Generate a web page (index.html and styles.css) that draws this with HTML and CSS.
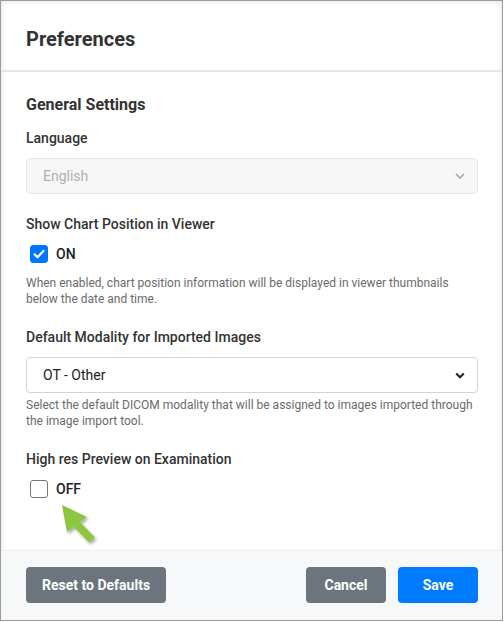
FILE: index.html
```html
<!DOCTYPE html>
<html>
<head>
<meta charset="utf-8">
<link rel="stylesheet" href="styles.css">
</head>
<body>
<div class="dialog">
  <div class="header">
    <h1 class="title">Preferences</h1>
  </div>
  <div class="content">
    <h2 class="section">General Settings</h2>
    <div class="group">
      <label class="label">Language</label>
      <div class="select disabled">
        <span>English</span>
        <svg class="chev" width="10" height="6" viewBox="0 0 10 6"><path d="M1 1l4 4 4-4" fill="none" stroke="#aaa" stroke-width="1.7"/></svg>
      </div>
    </div>
    <div class="group">
      <label class="label">Show Chart Position in Viewer</label>
      <div class="check-row">
        <span class="box checked"><svg width="14" height="14" viewBox="0 0 14 14"><path d="M2.6 7.4l2.9 2.9 5.9-6.4" fill="none" stroke="#fff" stroke-width="2.2" stroke-linecap="round" stroke-linejoin="round"/></svg></span>
        <span class="check-text">ON</span>
      </div>
      <p class="help">When enabled, chart position information will be displayed in viewer thumbnails below the date and time.</p>
    </div>
    <div class="group">
      <label class="label">Default Modality for Imported Images</label>
      <div class="select">
        <span>OT - Other</span>
        <svg class="chev" width="10" height="7" viewBox="0 0 10 7"><path d="M1.2 1.5l3.8 3.8 3.8-3.8" fill="none" stroke="#222" stroke-width="2"/></svg>
      </div>
      <p class="help tight">Select the default DICOM modality that will be assigned to images imported through the image import tool.</p>
    </div>
    <div class="group last">
      <label class="label">High res Preview on Examination</label>
      <div class="check-row">
        <span class="box"></span>
        <span class="check-text">OFF</span>
      </div>
      <svg class="arrow" width="48" height="50" viewBox="0 0 48 50">
        <defs>
          <filter id="sh" x="-30%" y="-30%" width="160%" height="160%">
            <feDropShadow dx="1.5" dy="2" stdDeviation="1.5" flood-color="#000" flood-opacity="0.35"/>
          </filter>
        </defs>
        <polygon filter="url(#sh)" fill="#8dc63f" points="5,3 30,15 23,19.9 38,35.4 32,40.6 17,25.1 10,30"/>
      </svg>
    </div>
  </div>
  <div class="footer">
    <button class="btn gray">Reset to Defaults</button>
    <div class="spacer"></div>
    <button class="btn gray small">Cancel</button>
    <button class="btn blue small">Save</button>
  </div>
</div>
</body>
</html>
```
FILE: styles.css
```css
html, body {
  margin: 0;
  padding: 0;
  background: #fff;
}
body {
  font-family: Roboto, "Liberation Sans", Arial, sans-serif;
  color: #212529;
}
.dialog {
  width: 503px;
  height: 621px;
  box-sizing: border-box;
  border: 1px solid #9c9c9c;
  box-shadow: inset 0 0 6px rgba(0,0,0,0.12);
  display: flex;
  flex-direction: column;
  background: #fff;
}
.header {
  height: 71px;
  box-sizing: border-box;
  border-bottom: 2px solid #e6e6e6;
  padding: 6px 24px 0 25px;
  display: flex;
  align-items: center;
}
.title {
  margin: 0;
  font-size: 20px;
  font-weight: 700;
  color: #333;
  line-height: 24px;
}
.content {
  flex: 1;
  padding: 21px 24px 0 25px;
  position: relative;
}
.section {
  margin: 0 0 11px 0;
  font-size: 16px;
  font-weight: 700;
  color: #333;
  line-height: 24px;
}
.group {
  margin-bottom: 20px;
  position: relative;
}
.label {
  display: block;
  font-size: 14px;
  font-weight: 500;
  color: #333;
  line-height: 20px;
  margin-bottom: 10px;
}
.select {
  height: 36px;
  box-sizing: border-box;
  border: 1px solid #d3d3d3;
  border-radius: 4px;
  padding: 0 12px 0 16px;
  display: flex;
  align-items: center;
  justify-content: space-between;
  font-size: 14px;
  color: #222;
  background: #fff;
}
.select.disabled {
  background: #f7f7f7;
  border-color: #e8e8e8;
  color: #b0b0b0;
}
.check-row {
  display: flex;
  align-items: center;
  height: 20px;
  margin-top: 1px;
  padding-left: 4px;
}
.box {
  width: 18px;
  height: 18px;
  box-sizing: border-box;
  border: 1.5px solid #767676;
  border-radius: 3px;
  display: flex;
  align-items: center;
  justify-content: center;
  background: #fff;
}
.box.checked {
  background: #0075ff;
  border-color: #0075ff;
}
.check-text {
  margin-left: 8px;
  font-size: 14px;
  font-weight: 500;
  color: #222;
}
.help {
  margin: 11px 0 0 0;
  font-size: 12px;
  line-height: 16px;
  color: #6b6b6b;
}
.help.tight {
  margin-top: 4px;
}
.group.last {
  margin-bottom: 0;
}
.arrow {
  position: absolute;
  left: 31px;
  top: 53px;
}
.footer {
  height: 70px;
  box-sizing: border-box;
  background: #f7f8fa;
  border-top: 1px solid #eceef1;
  padding: 0 24px 2px 25px;
  display: flex;
  align-items: center;
  gap: 12px;
}
.spacer {
  flex: 1;
}
.btn {
  height: 36px;
  border: none;
  border-radius: 4px;
  color: #fff;
  font-family: Roboto, "Liberation Sans", Arial, sans-serif;
  font-size: 14px;
  font-weight: 700;
  padding: 0 16px;
}
.btn.small {
  width: 80px;
  padding: 0;
}
.gray {
  background: #6c757d;
}
.blue {
  background: #007bff;
}
```
